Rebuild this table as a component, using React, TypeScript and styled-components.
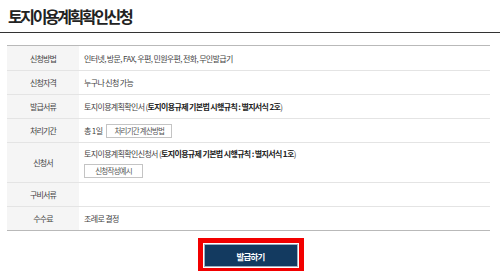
import React from 'react';
import styled, {createGlobalStyle} from 'styled-components';

const GlobalStyle = createGlobalStyle`
    * { box-sizing: border-box; }
    body {
        margin: 0;
        background: #fff;
        font-family: "Noto Sans CJK KR", "Noto Sans", sans-serif;
        color: #333;
    }
`

const Page = styled.div`
    width: 500px;
    height: 271px;
    overflow: hidden;
`
const Header = styled.header`
    height: 33px;
    padding: 4px 8px 0;
    border-bottom: 1.5px solid #333;
`
const Title = styled.h1`
    margin: 0;
    font-size: 16px;
    font-weight: 700;
    letter-spacing: -2.4px;
    line-height: 24px;
    color: #222;
`
const InfoTable = styled.div`
    margin: 12px 10px 0 7px;
    border-top: 1px solid #b9b9b9;
    border-bottom: 1px solid #b9b9b9;
`
const Row = styled.div<{ $tall?: boolean }>`
    display: grid;
    grid-template-columns: 72px 1fr;
    min-height: ${p => (p.$tall ? '40px' : '24px')};

    & + & {
        border-top: 1px solid #e4e4e4;
    }
`
const Label = styled.div`
    display: flex;
    align-items: center;
    justify-content: center;
    background: #f5f5f5;
    font-size: 8px;
    letter-spacing: -0.8px;
    color: #444;
`
const Value = styled.div`
    display: flex;
    align-items: center;
    padding-left: 5px;
    font-size: 8px;
    letter-spacing: -0.65px;
    color: #444;

    b {
        font-weight: 700;
        color: #222;
    }
`
const Inline = styled.span`
    display: flex;
    align-items: center;
    gap: 4px;
`
const Stack = styled.div`
    display: flex;
    flex-direction: column;
    align-items: flex-start;
    gap: 5px;
    padding: 2px 0;
`
const SmallButton = styled.span<{ $wide?: boolean }>`
    display: inline-flex;
    align-items: center;
    justify-content: center;
    height: 14px;
    width: ${p => (p.$wide ? '59px' : '66px')};
    border: 1px solid #c4c4c4;
    background: #fff;
    font-size: 7.5px;
    letter-spacing: -0.8px;
    color: #555;
`
const Actions = styled.div`
    display: flex;
    justify-content: center;
    padding-top: 13px;
`
const IssueButton = styled.button`
    width: 94px;
    height: 23px;
    margin-left: 1px;
    border: 1px solid #9fb0c2;
    background: #133a60;
    color: #fff;
    font-family: inherit;
    font-size: 8.5px;
    font-weight: 700;
    letter-spacing: -0.8px;
    outline: 5px solid #f20000;
    outline-offset: 1px;
`

type RowData = {
    label: string
    content: React.ReactNode
    tall?: boolean
}

const rows: RowData[] = [
    {label: '신청방법', content: '인터넷, 방문, FAX, 우편, 민원우편, 전화, 무인발급기'},
    {label: '신청자격', content: '누구나 신청 가능'},
    {
        label: '발급서류',
        content: <>토지이용계획확인서 (<b>토지이용규제 기본법 시행규칙 : 별지서식 2호</b>)</>,
    },
    {
        label: '처리기간',
        content: <Inline>총 1일 <SmallButton>처리기간 계산방법</SmallButton></Inline>,
    },
    {
        label: '신청서',
        tall: true,
        content: (
            <Stack>
                <span>토지이용계획확인신청서 (<b>토지이용규제 기본법 시행규칙 : 별지서식 1호</b>)</span>
                <SmallButton $wide>신청작성예시</SmallButton>
            </Stack>
        ),
    },
    {label: '구비서류', content: ''},
    {label: '수수료', content: '조례로 결정'},
]

export default function App() {
    return (
        <>
            <GlobalStyle/>
            <Page>
                <Header>
                    <Title>토지이용계획확인신청</Title>
                </Header>
                <InfoTable>
                    {rows.map((r, i) => (
                        <Row key={i} $tall={r.tall}>
                            <Label>{r.label}</Label>
                            <Value>{r.content}</Value>
                        </Row>
                    ))}
                </InfoTable>
                <Actions>
                    <IssueButton>발급하기</IssueButton>
                </Actions>
            </Page>
        </>
    );
}
